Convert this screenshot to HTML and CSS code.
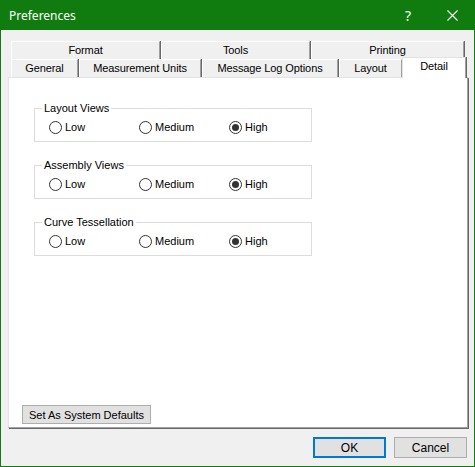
FILE: index.html
```html
<!DOCTYPE html>
<html>
<head>
<meta charset="utf-8">
<link rel="stylesheet" href="styles.css">
</head>
<body>
<div class="window">
  <div class="titlebar">
    <span class="title">Preferences</span>
    <span class="help">?</span>
    <span class="close"><svg width="11" height="11" viewBox="0 0 11 11"><path d="M0.5 0.5 L10.5 10.5 M10.5 0.5 L0.5 10.5" stroke="#fff" stroke-width="1.1" fill="none"/></svg></span>
  </div>
  <div class="body">
    <div class="tabctl">
      <div class="tabrow row1">
        <div class="tab w-format">Format</div>
        <div class="tab w-tools">Tools</div>
        <div class="tab w-printing">Printing</div>
      </div>
      <div class="tabrow row2">
        <div class="tab w-general">General</div>
        <div class="tab w-meas">Measurement Units</div>
        <div class="tab w-msg">Message Log Options</div>
        <div class="tab w-layout">Layout</div>
        <div class="tab w-detail selected">Detail</div>
      </div>
      <div class="panel">
        <fieldset class="group g1">
          <legend>Layout Views</legend>
          <div class="radios">
            <label class="radio"><span class="circle"></span>Low</label>
            <label class="radio"><span class="circle"></span>Medium</label>
            <label class="radio"><span class="circle on"></span>High</label>
          </div>
        </fieldset>
        <fieldset class="group g2">
          <legend>Assembly Views</legend>
          <div class="radios">
            <label class="radio"><span class="circle"></span>Low</label>
            <label class="radio"><span class="circle"></span>Medium</label>
            <label class="radio"><span class="circle on"></span>High</label>
          </div>
        </fieldset>
        <fieldset class="group g3">
          <legend>Curve Tessellation</legend>
          <div class="radios">
            <label class="radio"><span class="circle"></span>Low</label>
            <label class="radio"><span class="circle"></span>Medium</label>
            <label class="radio"><span class="circle on"></span>High</label>
          </div>
        </fieldset>
        <div class="panel-foot">
          <button class="btn defaults">Set As System Defaults</button>
        </div>
      </div>
    </div>
    <div class="actions">
      <button class="btn ok">OK</button>
      <button class="btn">Cancel</button>
    </div>
  </div>
</div>
</body>
</html>
```
FILE: styles.css
```css
* { box-sizing: border-box; }
html, body { margin: 0; padding: 0; background: #f0f0f0; }
body { width: 475px; height: 467px; overflow: hidden; font-family: "Liberation Sans", Arial, sans-serif; font-size: 11px; color: #000; }

.window {
  width: 475px; height: 467px;
  border: 1px solid #107c10; border-top: none;
  display: flex; flex-direction: column;
  background: #f0f0f0;
}
.titlebar {
  height: 30px; flex: none;
  background: #107c10; color: #fff;
  display: flex; align-items: center;
  margin: 0 -1px;
  padding-left: 9px;
  font-family: "Noto Sans", "Open Sans", sans-serif; font-size: 12px;
}
.title { flex: 1; }
.help { width: 42px; font-size: 14px; text-align: left; }
.close { width: 28px; display: flex; align-items: center; height: 30px; }
.close svg { display: block; }

.body { flex: 1; display: flex; flex-direction: column; padding: 11px 7px 8px 7px; }
.tabctl { flex: 1; display: flex; flex-direction: column; }
.tabrow { display: flex; height: 18px; padding-left: 3px; align-items: flex-end; flex: none; }

.tab {
  height: 18px;
  flex: none;
  background: #f0f0f0;
  border-top: 1px solid #fff;
  border-left: 1px solid #fff;
  border-right: 1px solid #a0a0a0;
  box-shadow: 1px 0 0 #696969;
  text-align: center;
  line-height: 17px;
  margin-right: 1px;
  letter-spacing: -0.1px;
}
.w-format { width: 149px; }
.w-tools { width: 149px; }
.w-printing { width: 153px; }
.w-general { width: 67px; }
.w-meas { width: 122px; }
.w-msg { width: 136px; }
.w-layout { width: 63px; }
.w-detail { width: 64px; }

.tab.selected {
  position: relative; z-index: 2;
  height: 21px;
  margin-top: -3px; margin-bottom: -1px;
  margin-left: -1px;
  background: #fff;
  border-top: 1px solid #e3e3e3;
  border-left: 1px solid #e3e3e3;
  line-height: 14px;
  padding-top: 1px;
}

.panel {
  flex: 1;
  background: #fff;
  border-top: 1px solid #e3e3e3;
  border-left: 1px solid #e3e3e3;
  border-right: 1px solid #a0a0a0;
  border-bottom: 1px solid #a0a0a0;
  box-shadow: 1px 1px 0 #696969;
  display: flex; flex-direction: column;
  padding: 24px 0 3px 25px;
  margin-right: -1px;
}

.group {
  width: 278px;
  margin: 0 0 17px 0;
  padding: 0 0 7px 7px;
  border: 1px solid #dcdcdc;
  min-width: 0;
}
.group legend { padding: 0 2px; line-height: 13px; font-size: 11px; }
.radios { display: flex; padding-left: 7px; margin-top: 5px; }
.radio { display: flex; align-items: center; flex: none; width: 90px; height: 14px; gap: 3px; }
.circle {
  flex: none;
  width: 13px; height: 13px; border-radius: 50%;
  border: 1px solid #333; background: #fff;
  display: flex; align-items: center; justify-content: center;
}
.circle.on::after { content: ""; width: 7px; height: 7px; border-radius: 50%; background: #333; }

.panel-foot { margin-top: auto; }
.btn {
  font-family: "Liberation Sans", Arial, sans-serif; font-size: 11px; color: #000;
  background: #e1e1e1; border: 1px solid #adadad;
  padding: 0; margin: 0;
}
.defaults { width: 129px; height: 19px; margin-left: -12px; }
.actions { display: flex; justify-content: flex-end; gap: 8px; margin-top: 9px; flex: none; margin-right: -7px; padding-right: 7px; }
.actions .btn { width: 73px; height: 21px; font-size: 12px; }
.actions .btn.ok { border: 2px solid #0078d7; }
```
